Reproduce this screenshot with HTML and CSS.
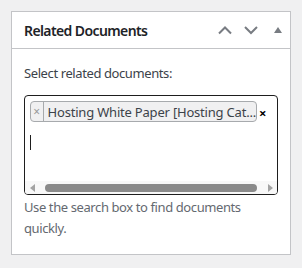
FILE: index.html
```html
<!DOCTYPE html>
<html>
<head>
<meta charset="utf-8">
<link rel="stylesheet" href="styles.css">
</head>
<body>
<div class="panel">
  <div class="header">
    <h2 class="title">Related Documents</h2>
    <div class="actions">
      <svg class="ico" width="16" height="16" viewBox="0 0 16 16"><path d="M2 11.5 L8 5.5 L14 11.5" fill="none" stroke="#787c82" stroke-width="2"/></svg>
      <svg class="ico" width="16" height="16" viewBox="0 0 16 16"><path d="M2 5 L8 11 L14 5" fill="none" stroke="#787c82" stroke-width="2"/></svg>
      <svg class="ico tri" width="10" height="16" viewBox="0 0 10 16"><path d="M1 11 L5 5 L9 11 Z" fill="#787c82"/></svg>
    </div>
  </div>
  <div class="inside">
    <p class="label">Select related documents:</p>
    <div class="box">
      <div class="choices">
        <span class="tag"><span class="tag-x">×</span><span class="tag-text">Hosting White Paper [Hosting Cat...</span></span><span class="clear">×</span>
      </div>
      <div class="cursor"></div>
      <div class="scrollbar">
        <span class="arr left"></span>
        <span class="track"><span class="thumb"></span></span>
        <span class="arr right"></span>
      </div>
    </div>
    <p class="help">Use the search box to find documents quickly.</p>
  </div>
</div>
</body>
</html>
```

FILE: styles.css
```css
* { box-sizing: border-box; }
body {
  margin: 0;
  padding: 11px;
  background: #f0f0f1;
  font-family: "Noto Sans", "Open Sans", sans-serif;
  font-size: 13px;
  color: #3c434a;
}
.panel {
  width: 280px;
  height: 244px;
  background: #fff;
  border: 1px solid #c3c4c7;
}
.header {
  height: 37px;
  border-bottom: 1px solid #c3c4c7;
  display: flex;
  align-items: center;
  padding: 0 7px 0 12px;
}
.title {
  margin: 0;
  flex: 1;
  font-size: 14px;
  font-weight: 600;
  color: #1d2327;
  letter-spacing: -0.6px;
}
.actions {
  display: flex;
  align-items: center;
  gap: 10px;
}
.ico { display: block; }
.tri { margin-left: 4px; }
.inside {
  padding: 14px 12px 12px;
}
.label {
  margin: 0 0 12px;
  line-height: 20px;
  letter-spacing: -0.4px;
}
.box {
  width: 254px;
  height: 100px;
  border: 1px solid #1e1e1e;
  border-radius: 4px;
  display: flex;
  flex-direction: column;
  padding: 5px 0 0 5px;
}
.choices {
  display: flex;
  align-items: center;
}
.tag {
  display: flex;
  align-items: center;
  width: 227px;
  height: 21px;
  background: #f0f0f1;
  border: 1px solid #a7aaad;
  border-radius: 4px;
  overflow: hidden;
}
.tag-x {
  width: 17px;
  height: 100%;
  border-right: 1px solid #a7aaad;
  color: #999;
  font-size: 12px;
  display: flex;
  align-items: center;
  justify-content: center;
  line-height: 1;
}
.tag-text {
  padding-left: 4px;
  white-space: nowrap;
  color: #3c434a;
  letter-spacing: -0.2px;
}
.clear {
  margin-left: 2px;
  color: #000;
  font-weight: 700;
  font-size: 13px;
  line-height: 1;
  margin-top: 3px;
}
.cursor {
  width: 1px;
  height: 15px;
  background: #1e1e1e;
  margin-top: 13px;
}
.scrollbar {
  margin-top: auto;
  margin-left: -5px;
  height: 13px;
  background: #f8f8f8;
  display: flex;
  align-items: center;
  padding: 0 3px;
  border-radius: 0 0 3px 3px;
}
.arr {
  width: 0;
  height: 0;
  border-top: 4px solid transparent;
  border-bottom: 4px solid transparent;
}
.arr.left { border-right: 5px solid #a3a3a3; margin-left: 2px; }
.arr.right { border-left: 5px solid #a3a3a3; margin-right: 1px; }
.track {
  flex: 1;
  padding: 0 9px 0 10px;
  display: flex;
}
.thumb {
  width: 212px;
  height: 8px;
  border-radius: 4px;
  background: #8a8a8a;
}
.help {
  margin: 2px 0 0;
  line-height: 21px;
  color: #646970;
  letter-spacing: -0.4px;
}
```
